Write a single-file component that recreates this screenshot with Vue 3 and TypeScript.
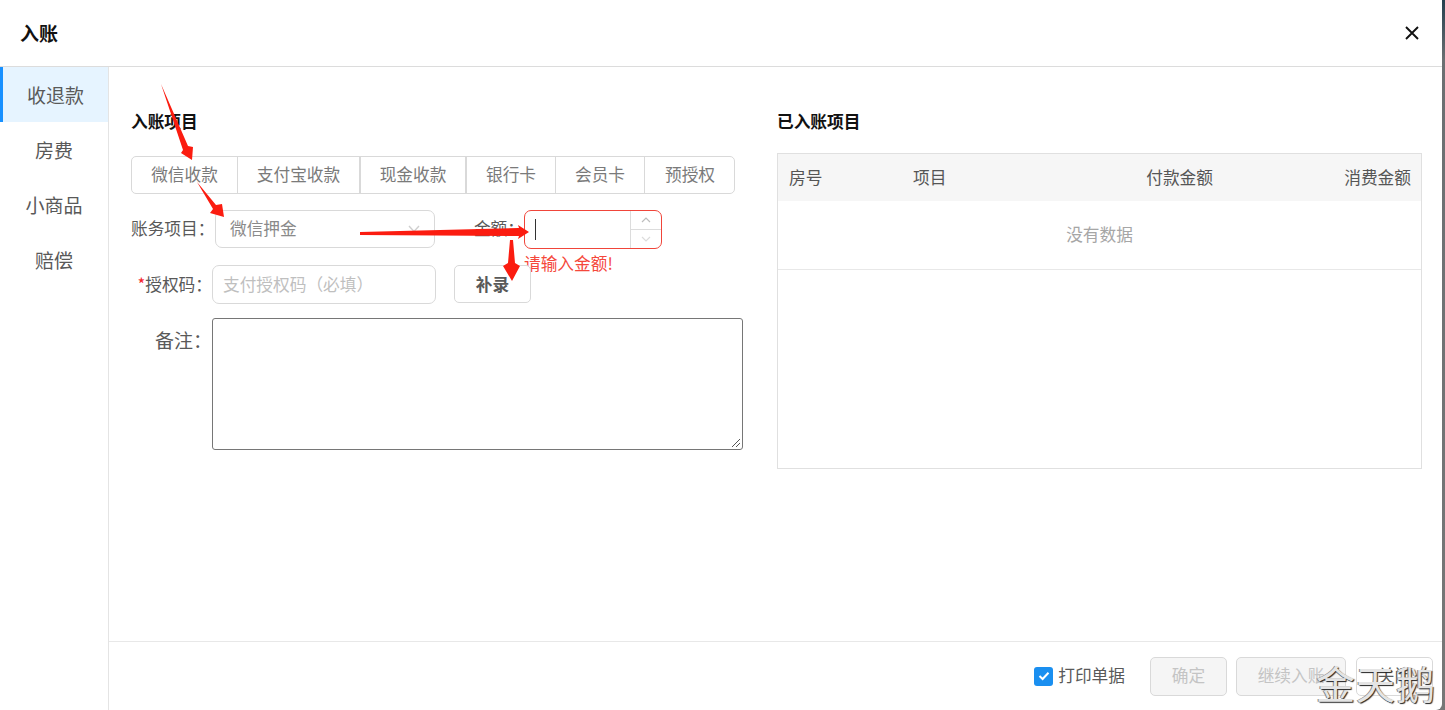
<script setup lang="ts">
const menu: string[] = ['收退款', '房费', '小商品', '赔偿']
const tabs: { label: string; width: number }[] = [
  { label: '微信收款', width: 106 },
  { label: '支付宝收款', width: 123 },
  { label: '现金收款', width: 106 },
  { label: '银行卡', width: 89 },
  { label: '会员卡', width: 89 },
  { label: '预授权', width: 90 },
]
</script>

<template>
  <div class="screen">
    <div class="modal">
      <header class="head">
        <span class="head-title">入账</span>
        <svg class="close" width="14" height="14" viewBox="0 0 14 14">
          <path d="M1 1L13 13M13 1L1 13" stroke="#111" stroke-width="1.9" fill="none" />
        </svg>
      </header>
      <div class="body">
        <nav class="side">
          <div v-for="(m, i) in menu" :key="m" class="side-item" :class="{ on: i === 0 }">{{ m }}</div>
        </nav>
        <div class="main">
          <div class="content">
            <section class="left">
              <h3 class="sec-title">入账项目</h3>
              <div class="tabs">
                <div v-for="t in tabs" :key="t.label" class="tab" :style="{ width: t.width + 'px' }">{{ t.label }}</div>
              </div>
              <div class="row row-a">
                <label class="lab lab-a">账务项目：</label>
                <div class="select">
                  <span>微信押金</span>
                  <svg width="12" height="8" viewBox="0 0 12 8"><path d="M1 1L6 6.5L11 1" stroke="#cfcfcf" stroke-width="1.4" fill="none" /></svg>
                </div>
                <label class="lab lab-m">金额：</label>
                <div class="amount-wrap">
                  <div class="amount">
                    <span class="caret"></span>
                    <div class="steps">
                      <div class="step"><svg width="10" height="6" viewBox="0 0 10 6"><path d="M1 5L5 1L9 5" stroke="#bdbdbd" stroke-width="1.2" fill="none" /></svg></div>
                      <div class="step"><svg width="10" height="6" viewBox="0 0 10 6"><path d="M1 1L5 5L9 1" stroke="#dcdcdc" stroke-width="1.2" fill="none" /></svg></div>
                    </div>
                  </div>
                  <div class="err">请输入金额!</div>
                </div>
              </div>
              <div class="row row-b">
                <label class="lab lab-b"><i>*</i>授权码：</label>
                <div class="code">支付授权码（必填）</div>
                <button class="extra">补录</button>
              </div>
              <div class="row row-c">
                <label class="lab lab-b note-lab">备注：</label>
                <div class="note">
                  <svg class="grip" width="11" height="11" viewBox="0 0 11 11"><path d="M10 2L2 10M10 6L6 10" stroke="#555" stroke-width="1" fill="none" /></svg>
                </div>
              </div>
            </section>
            <section class="right">
              <h3 class="sec-title">已入账项目</h3>
              <div class="table">
                <div class="thead">
                  <span class="c1">房号</span>
                  <span class="c2">项目</span>
                  <span class="c3">付款金额</span>
                  <span class="c4">消费金额</span>
                </div>
                <div class="empty">没有数据</div>
              </div>
            </section>
          </div>
          <footer class="foot">
            <span class="check">
              <svg width="12" height="10" viewBox="0 0 12 10"><path d="M1.5 5L4.6 8L10.5 1.8" stroke="#fff" stroke-width="2" fill="none" /></svg>
            </span>
            <span class="print">打印单据</span>
            <button class="btn b1">确定</button>
            <button class="btn b2">继续入账</button>
            <button class="btn b3">关闭</button>
          </footer>
        </div>
      </div>
    </div>
    <div class="edge"></div>

    <svg class="arrows" width="1445" height="710" viewBox="0 0 1445 710">
      <g fill="#fb1c10">
        <polygon points="161,84 188,146 193,147 192,160 181,153 183,150" />
        <polygon points="197,182 216,205 222,204 224,217 210,213 213,209" />
        <polygon points="360,232 519,228 518,225 529,232 518,239 519,236 360,235" />
        <polygon points="510,240 513,240 515,263 520,266 512,281 503,266 508,263" />
      </g>
    </svg>
    <div class="mark">金天鹅</div>
  </div>
</template>

<style>
html, body { margin: 0; background: #fff; overflow: hidden; }
</style>

<style scoped>
.screen {
  position: relative;
  width: 1445px;
  height: 710px;
  display: flex;
  overflow: hidden;
  font-family: "Noto Sans CJK SC", "Noto Sans", sans-serif;
  font-size: 16.7px;
  color: #595959;
}
.modal { position: relative; z-index: 1; width: 1442px; height: 710px; display: flex; flex-direction: column; background: #fff; border-radius: 0 0 6px 0; flex: none; }
.edge { width: 9px; margin-left: -6px; height: 710px; flex: none; background: linear-gradient(#26404f 0, #6b6f72 60px, #777 100%); }
.head {
  height: 66px;
  flex: none;
  border-bottom: 1px solid #dcdcdc;
  display: flex;
  align-items: center;
  justify-content: space-between;
  padding: 0 23px 0 20px;
}
.head-title { font-size: 19px; font-weight: 700; color: #111; position: relative; top: -1px; }
.body { flex: 1; display: flex; min-height: 0; }
.side { width: 108px; flex: none; border-right: 1px solid #e4e4e4; }
.side-item { height: 55px; box-sizing: border-box; padding-top: 1px; line-height: 54px; text-align: center; font-size: 19px; color: #595959; }
.side-item.on { background: #e6f4ff; box-shadow: inset 3px 0 0 #1890ff; padding-left: 3px; }
.main { flex: 1; display: flex; flex-direction: column; min-width: 0; }
.content { flex: 1; display: flex; padding: 42px 20px 0 22px; min-height: 0; }
.left { width: 612px; margin-right: 34px; flex: none; }
.right { width: 645px; flex: none; }
.sec-title { margin: 0; font-size: 16.7px; line-height: 24px; font-weight: 700; color: #111; }
.tabs { display: flex; margin-top: 23px; height: 38px; width: 604px; box-sizing: border-box; border: 1px solid #d9d9d9; border-radius: 5px; }
.tab { box-sizing: border-box; line-height: 34px; text-align: center; border-right: 1px solid #d9d9d9; color: #7a7a7a; font-size: 16.7px; flex: none; }
.tab:nth-child(2) { border-right-width: 2px; }
.tab:nth-child(3) { border-right-width: 2px; }
.tab:last-child { border-right: 0; }
.row { display: flex; }
.lab { white-space: nowrap; color: #595959; }
.row-a { margin-top: 16px; align-items: flex-start; }
.lab-a { width: 84px; line-height: 37px; }
.select {
  width: 220px; height: 38px; box-sizing: border-box;
  border: 1px solid #d9d9d9; border-radius: 7px;
  display: flex; align-items: center; justify-content: space-between;
  padding: 0 14px 2px; color: #8a8a8a;
}
.select svg { position: relative; top: 1px; }
.lab-m { width: 89px; text-align: right; line-height: 37px; color: #595959; }
.amount-wrap { width: 138px; }
.amount { position: relative; height: 39px; box-sizing: border-box; border: 1px solid #f0453a; border-radius: 7px; overflow: hidden; }
.caret { position: absolute; left: 10px; top: 8px; width: 1px; height: 21px; background: #333; }
.steps { position: absolute; right: 0; top: 0; bottom: 0; width: 30px; border-left: 1px solid #dcdcdc; display: flex; flex-direction: column; }
.step { flex: 1; display: flex; align-items: center; justify-content: center; }
.step + .step { border-top: 1px solid #dcdcdc; }
.err { color: #f5483b; font-size: 16.7px; line-height: 28px; white-space: nowrap; margin-top: 0; }
.row-b { margin-top: -12px; align-items: flex-start; position: relative; }
.lab-b { width: 81px; text-align: right; line-height: 39px; }
.lab-b i { color: #f5222d; font-style: normal; }
.code {
  width: 224px; height: 39px; box-sizing: border-box;
  border: 1px solid #d9d9d9; border-radius: 7px;
  line-height: 37px; padding-left: 10px; color: #bfbfbf; white-space: nowrap;
}
.extra {
  width: 77px; height: 38px; margin-left: 18px; box-sizing: border-box;
  background: #fff; border: 1px solid #d9d9d9; border-radius: 5px;
  font: 700 16.7px "Noto Sans CJK SC", sans-serif; color: #595959; padding: 0;
}
.row-c { margin-top: 14px; align-items: flex-start; }
.note-lab { line-height: 43px; font-size: 19px; }
.note {
  position: relative; width: 531px; height: 132px; box-sizing: border-box;
  border: 1px solid #767676; border-radius: 3px;
}
.grip { position: absolute; right: 1px; bottom: 1px; }
.table { margin-top: 20px; height: 316px; box-sizing: border-box; border: 1px solid #e0e0e0; }
.thead { height: 47px; background: #f6f6f6; display: flex; align-items: center; position: relative; color: #555; padding-bottom: 2px; box-sizing: border-box; }
.thead span { position: absolute; }
.c1 { left: 11px; }
.c2 { left: 135px; }
.c3 { right: 208px; }
.c4 { right: 10px; }
.empty { height: 68px; line-height: 66px; text-align: center; color: #a6a6a6; border-bottom: 1px solid #e8e8e8; }
.foot {
  height: 69px; flex: none; box-sizing: border-box; border-top: 1px solid #e8e8e8;
  display: flex; align-items: center; padding: 0 9px 0 0; justify-content: flex-end;
}
.check { width: 19px; height: 19px; border-radius: 3px; background: #1a8ff0; display: flex; align-items: center; justify-content: center; margin-right: 5px; }
.print { margin-right: 25px; color: #595959; position: relative; top: -1px; }
.btn {
  height: 39px; box-sizing: border-box; border: 1px solid #d9d9d9; border-radius: 5px;
  background: #f5f5f5; color: #c4c4c4; font: 16.7px "Noto Sans CJK SC", sans-serif; padding: 0 0 2px;
}
.b1 { width: 77px; margin-right: 9px; }
.b2 { width: 110px; margin-right: 10px; }
.b3 { width: 77px; background: #fff; color: #595959; }
.arrows { position: absolute; z-index: 2; left: 0; top: 0; pointer-events: none; }
.mark {
  position: absolute; z-index: 3; left: 1316px; top: 657px; font-size: 39px; line-height: 50px; letter-spacing: 1px; white-space: nowrap;
  color: #e4e4e4; text-shadow: 1px 1px 1px #222, -1px 0 0 #888;
}
</style>
